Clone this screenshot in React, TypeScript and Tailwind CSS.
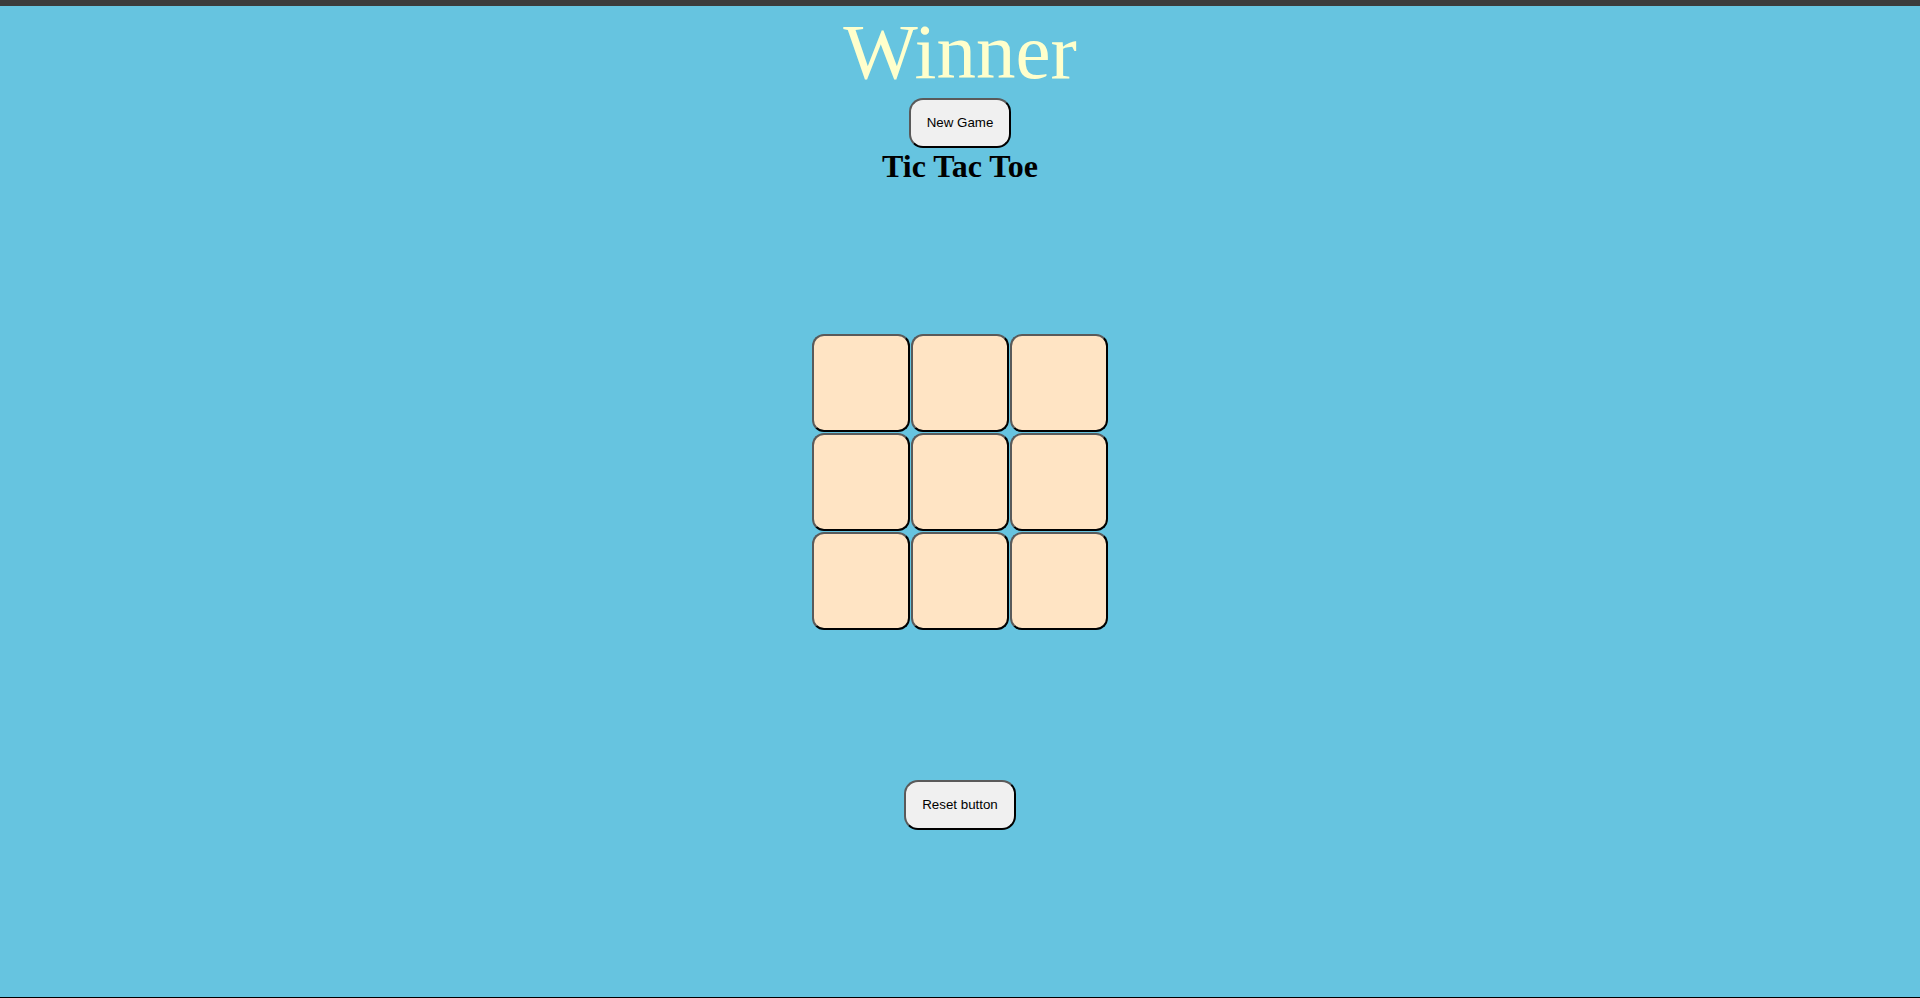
export default function App() {
  const cells = Array.from({ length: 9 });
  const edge =
    "border-2 border-t-[#5a5a5a] border-l-[#5a5a5a] border-b-black border-r-black";

  return (
    <main className="flex h-[998px] flex-col bg-[#66c4e0] font-['Liberation_Serif',serif]">
      <div className="h-[6px] bg-[#3c3c3c]" />
      <div className="flex flex-1 flex-col items-center">
        <h2 className="text-[79px] leading-[92px] text-[#ffffcc]">Winner</h2>
        <button
          className={`h-[50px] rounded-[14px] bg-[#f0f0f0] px-4 font-['Liberation_Sans',sans-serif] text-[13.33px] text-black ${edge}`}
        >
          New Game
        </button>
        <h1 className="text-[32px] font-bold leading-[37px] text-black">Tic Tac Toe</h1>

        <div className="mt-[149px] grid grid-cols-[repeat(3,98px)] gap-px">
          {cells.map((_, i) => (
            <button key={i} className={`h-[98px] w-[98px] rounded-[12px] bg-[#ffe4c4] ${edge}`} />
          ))}
        </div>

        <button
          className={`mt-[150px] h-[50px] rounded-[14px] bg-[#f0f0f0] px-4 font-['Liberation_Sans',sans-serif] text-[13.33px] text-black ${edge}`}
        >
          Reset button
        </button>
      </div>
      <div className="h-px bg-black" />
    </main>
  );
}
